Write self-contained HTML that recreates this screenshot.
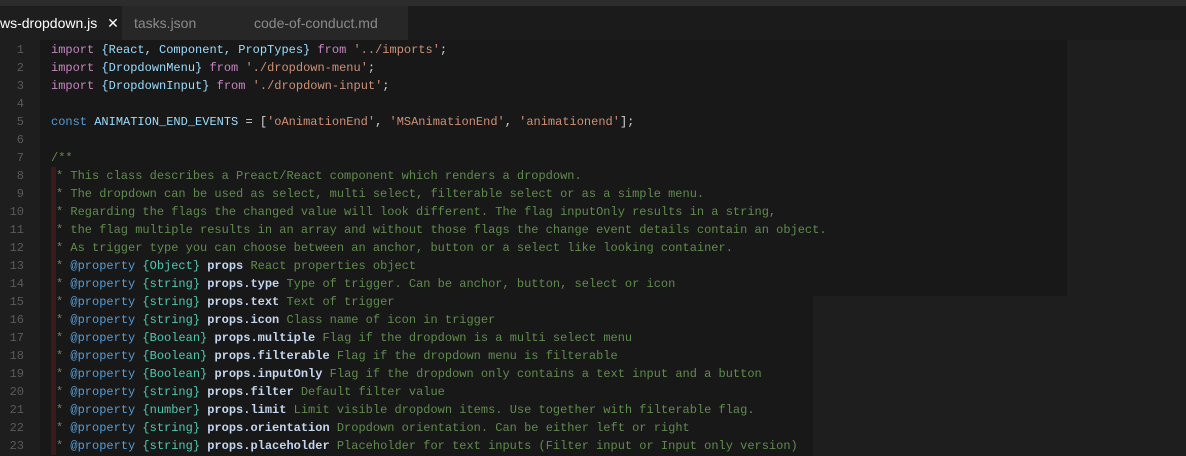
<!DOCTYPE html><html><head><style>
body{margin:0;width:1186px;height:456px;overflow:hidden;background:#1e1e1e;position:relative;font-family:"Liberation Mono",monospace}
.top{position:absolute;left:0;top:0;width:1186px;height:6px;background:#2c2c2c}
.tabs{position:absolute;left:0;top:6px;width:1186px;height:34px;background:#1b1b1b}
.tab{position:absolute;top:0;height:34px;font:14px "Liberation Sans",sans-serif;line-height:34px;color:#8a8a8a;background:#272727}
.hl{position:absolute;background:#181818}
.ln{position:absolute;left:0;width:24px;text-align:right;color:#5a5a5a;font-size:12px;line-height:18px}
.code{position:absolute;left:51px;font-size:12px;color:#d4d4d4}
.r{display:inline-block;width:5px;height:18px;background:#3b1a1c;vertical-align:top}
.k{color:#c586c0}.b{color:#9cdcfe}.s{color:#ce9178}.c{color:#608b4e}.d{color:#569cd6}.t{color:#4ec9b0}.p{color:#c4d6ee;font-weight:bold}
.line{height:18px;line-height:18px;white-space:pre}
</style></head><body>
<div class="top"></div>
<div class="tabs">
<div class="tab" style="left:0;width:122px;background:#1e1e1e;color:#fff">ws-dropdown.js <span style="margin-left:6px">✕</span></div>
<div class="tab" style="left:122px;width:120px;padding-left:12px;box-sizing:border-box">tasks.json</div>
<div class="tab" style="left:242px;width:166px;padding-left:12px;box-sizing:border-box">code-of-conduct.md</div>
</div>
<div class="hl" style="left:40px;top:40px;width:1027px;height:256px"></div>
<div class="hl" style="left:40px;top:296px;width:773px;height:160px"></div>
<div class="ln" style="top:41px">1<br>2<br>3<br>4<br>5<br>6<br>7<br>8<br>9<br>10<br>11<br>12<br>13<br>14<br>15<br>16<br>17<br>18<br>19<br>20<br>21<br>22<br>23</div>
<div class="code" style="top:41px"><div class="line"><span class="k">import</span> <span class="b">{React, Component, PropTypes}</span> <span class="k">from</span> <span class="s">'../imports'</span>;</div><div class="line"><span class="k">import</span> <span class="b">{DropdownMenu}</span> <span class="k">from</span> <span class="s">'./dropdown-menu'</span>;</div><div class="line"><span class="k">import</span> <span class="b">{DropdownInput}</span> <span class="k">from</span> <span class="s">'./dropdown-input'</span>;</div><div class="line"> </div><div class="line"><span class="d">const</span> <span class="b">ANIMATION_END_EVENTS</span> = [<span class="s">'oAnimationEnd'</span>, <span class="s">'MSAnimationEnd'</span>, <span class="s">'animationend'</span>];</div><div class="line"> </div><div class="line c">/**</div><div class="line c"><span class="r"></span>* This class describes a Preact/React component which renders a dropdown.</div><div class="line c"><span class="r"></span>* The dropdown can be used as select, multi select, filterable select or as a simple menu.</div><div class="line c"><span class="r"></span>* Regarding the flags the changed value will look different. The flag inputOnly results in a string,</div><div class="line c"><span class="r"></span>* the flag multiple results in an array and without those flags the change event details contain an object.</div><div class="line c"><span class="r"></span>* As trigger type you can choose between an anchor, button or a select like looking container.</div><div class="line c"><span class="r"></span>* <span class="d">@property</span> <span class="t">{Object}</span> <span class="p">props</span> React properties object</div><div class="line c"><span class="r"></span>* <span class="d">@property</span> <span class="t">{string}</span> <span class="p">props.type</span> Type of trigger. Can be anchor, button, select or icon</div><div class="line c"><span class="r"></span>* <span class="d">@property</span> <span class="t">{string}</span> <span class="p">props.text</span> Text of trigger</div><div class="line c"><span class="r"></span>* <span class="d">@property</span> <span class="t">{string}</span> <span class="p">props.icon</span> Class name of icon in trigger</div><div class="line c"><span class="r"></span>* <span class="d">@property</span> <span class="t">{Boolean}</span> <span class="p">props.multiple</span> Flag if the dropdown is a multi select menu</div><div class="line c"><span class="r"></span>* <span class="d">@property</span> <span class="t">{Boolean}</span> <span class="p">props.filterable</span> Flag if the dropdown menu is filterable</div><div class="line c"><span class="r"></span>* <span class="d">@property</span> <span class="t">{Boolean}</span> <span class="p">props.inputOnly</span> Flag if the dropdown only contains a text input and a button</div><div class="line c"><span class="r"></span>* <span class="d">@property</span> <span class="t">{string}</span> <span class="p">props.filter</span> Default filter value</div><div class="line c"><span class="r"></span>* <span class="d">@property</span> <span class="t">{number}</span> <span class="p">props.limit</span> Limit visible dropdown items. Use together with filterable flag.</div><div class="line c"><span class="r"></span>* <span class="d">@property</span> <span class="t">{string}</span> <span class="p">props.orientation</span> Dropdown orientation. Can be either left or right</div><div class="line c"><span class="r"></span>* <span class="d">@property</span> <span class="t">{string}</span> <span class="p">props.placeholder</span> Placeholder for text inputs (Filter input or Input only version)</div></div>
</body></html>
